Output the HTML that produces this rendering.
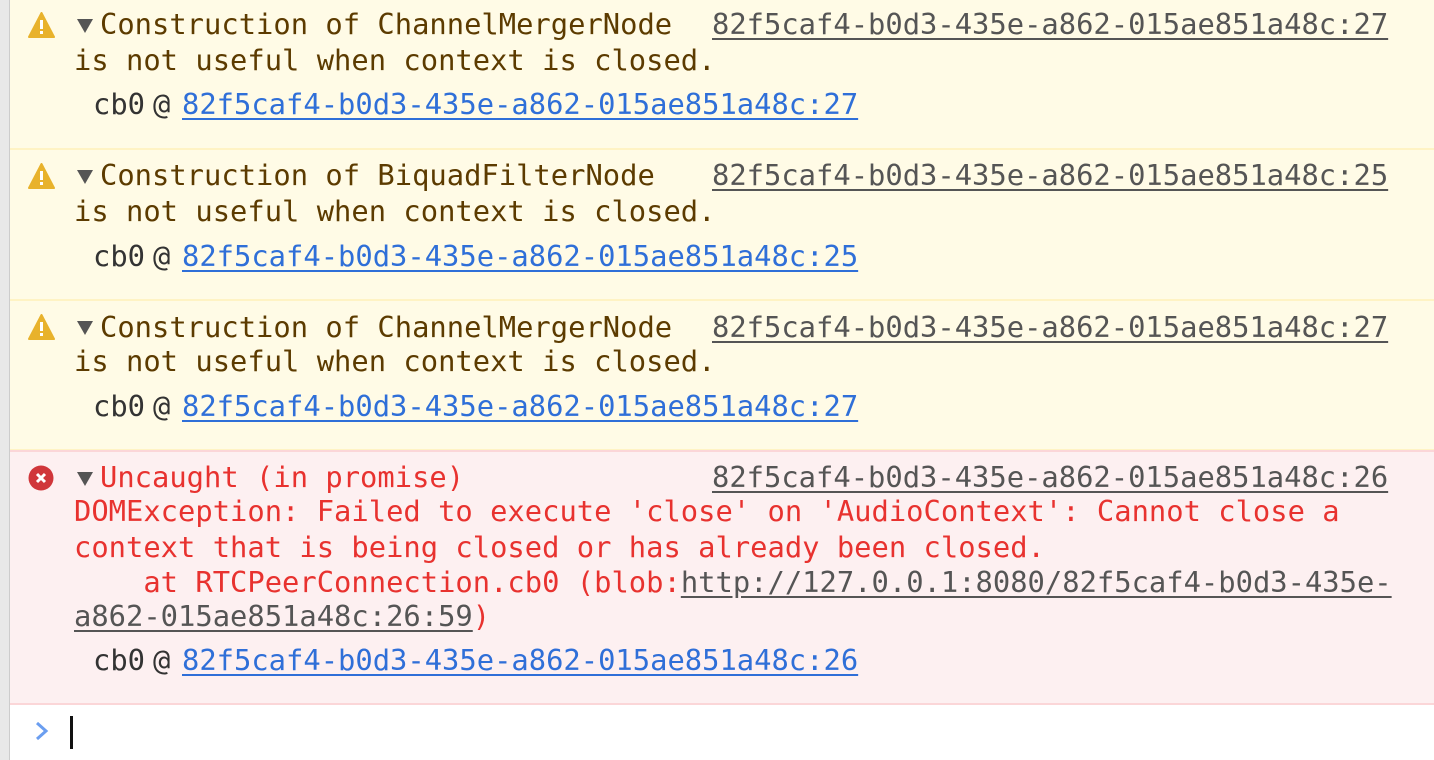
<!DOCTYPE html>
<html><head><meta charset="utf-8"><style>
html,body{margin:0;padding:0;width:1434px;height:760px;overflow:hidden;background:#fff;}
body{position:relative;font-family:"DejaVu Sans Mono","Liberation Mono",monospace;font-size:28.8px;}
.l{position:absolute;white-space:pre;line-height:36px;}
.row{position:absolute;left:10px;right:0;}
.w{background:#fffbe6;border-bottom:2px solid #fff3c4;}
.e{background:#fdf0f1;border-bottom:2px solid #fbd6d8;border-top:2px solid #fbd6d8;}
.wt{color:#5c3b00;}
.et{color:#e8322f;}
.src{color:#555;text-decoration:underline;text-underline-offset:4px;}
.blue{color:#2f6fd8;text-decoration:underline;text-underline-offset:4px;}
.cb{color:#333;}
.tri{position:absolute;width:0;height:0;border-left:8px solid transparent;border-right:8px solid transparent;border-top:14px solid #555;}
</style></head><body>
<div style="position:absolute;left:0;top:0;width:9px;height:760px;background:#e8e8e8;border-right:1px solid #ccc;"></div>
<div class="row w" style="top:0;height:148px"></div>
<div class="row w" style="top:150;height:149px;top:150px"></div>
<div class="row w" style="top:301px;height:148px"></div>
<div class="row e" style="top:450px;height:251px"></div>

<!-- icons -->
<svg style="position:absolute;left:28px;top:12px" width="27" height="26" viewBox="0 0 27 26"><path d="M13.5 1 L26 25 H1 Z" fill="#e8b22c" stroke="#e8b22c" stroke-linejoin="round" stroke-width="2"/><rect x="12" y="8" width="3" height="9" fill="#fff"/><rect x="12" y="19" width="3" height="3" fill="#fff"/></svg>
<svg style="position:absolute;left:28px;top:163px" width="27" height="26" viewBox="0 0 27 26"><path d="M13.5 1 L26 25 H1 Z" fill="#e8b22c" stroke="#e8b22c" stroke-linejoin="round" stroke-width="2"/><rect x="12" y="8" width="3" height="9" fill="#fff"/><rect x="12" y="19" width="3" height="3" fill="#fff"/></svg>
<svg style="position:absolute;left:28px;top:314px" width="27" height="26" viewBox="0 0 27 26"><path d="M13.5 1 L26 25 H1 Z" fill="#e8b22c" stroke="#e8b22c" stroke-linejoin="round" stroke-width="2"/><rect x="12" y="8" width="3" height="9" fill="#fff"/><rect x="12" y="19" width="3" height="3" fill="#fff"/></svg>
<svg style="position:absolute;left:28px;top:465px" width="26" height="26" viewBox="0 0 26 26"><circle cx="13" cy="13" r="12.5" fill="#d0363a"/><path d="M9 9 L17 17 M17 9 L9 17" stroke="#fff" stroke-width="3"/></svg>

<div class="tri" style="left:77px;top:170px"></div>
<div class="tri" style="left:77px;top:19px"></div>
<div class="tri" style="left:77px;top:321px"></div>
<div class="tri" style="left:77px;top:472px"></div>

<div class="l wt" style="left:100px;top:6px">Construction of ChannelMergerNode</div>
<div class="l src" style="left:712px;top:6px">82f5caf4-b0d3-435e-a862-015ae851a48c:27</div>
<div class="l wt" style="left:74px;top:42px">is not useful when context is closed.</div>
<div class="l cb" style="left:93px;top:86px">cb0</div><div class="l cb" style="left:153px;top:86px">@</div>
<div class="l blue" style="left:182px;top:86px">82f5caf4-b0d3-435e-a862-015ae851a48c:27</div>

<div class="l wt" style="left:100px;top:157px">Construction of BiquadFilterNode</div>
<div class="l src" style="left:712px;top:157px">82f5caf4-b0d3-435e-a862-015ae851a48c:25</div>
<div class="l wt" style="left:74px;top:193px">is not useful when context is closed.</div>
<div class="l cb" style="left:93px;top:238px">cb0</div><div class="l cb" style="left:153px;top:238px">@</div>
<div class="l blue" style="left:182px;top:238px">82f5caf4-b0d3-435e-a862-015ae851a48c:25</div>

<div class="l wt" style="left:100px;top:309px">Construction of ChannelMergerNode</div>
<div class="l src" style="left:712px;top:309px">82f5caf4-b0d3-435e-a862-015ae851a48c:27</div>
<div class="l wt" style="left:74px;top:343px">is not useful when context is closed.</div>
<div class="l cb" style="left:93px;top:388px">cb0</div><div class="l cb" style="left:153px;top:388px">@</div>
<div class="l blue" style="left:182px;top:388px">82f5caf4-b0d3-435e-a862-015ae851a48c:27</div>

<div class="l et" style="left:100px;top:459px">Uncaught (in promise)</div>
<div class="l src" style="left:712px;top:459px">82f5caf4-b0d3-435e-a862-015ae851a48c:26</div>
<div class="l et" style="left:74px;top:493px">DOMException: Failed to execute 'close' on 'AudioContext': Cannot close a</div>
<div class="l et" style="left:74px;top:529px">context that is being closed or has already been closed.</div>
<div class="l et" style="left:74px;top:564px">    at RTCPeerConnection.cb0 (blob:<span class="src">http://127.0.0.1:8080/82f5caf4-b0d3-435e-</span></div>
<div class="l et" style="left:74px;top:598px"><span class="src">a862-015ae851a48c:26:59</span>)</div>
<div class="l cb" style="left:93px;top:642px">cb0</div><div class="l cb" style="left:153px;top:642px">@</div>
<div class="l blue" style="left:182px;top:642px">82f5caf4-b0d3-435e-a862-015ae851a48c:26</div>

<svg style="position:absolute;left:35px;top:721px" width="14" height="20" viewBox="0 0 14 20"><path d="M2 2 L11 10 L2 18" fill="none" stroke="#6b9ef0" stroke-width="3"/></svg>
<div style="position:absolute;left:70px;top:716px;width:3px;height:33px;background:#111"></div>
</body></html>
